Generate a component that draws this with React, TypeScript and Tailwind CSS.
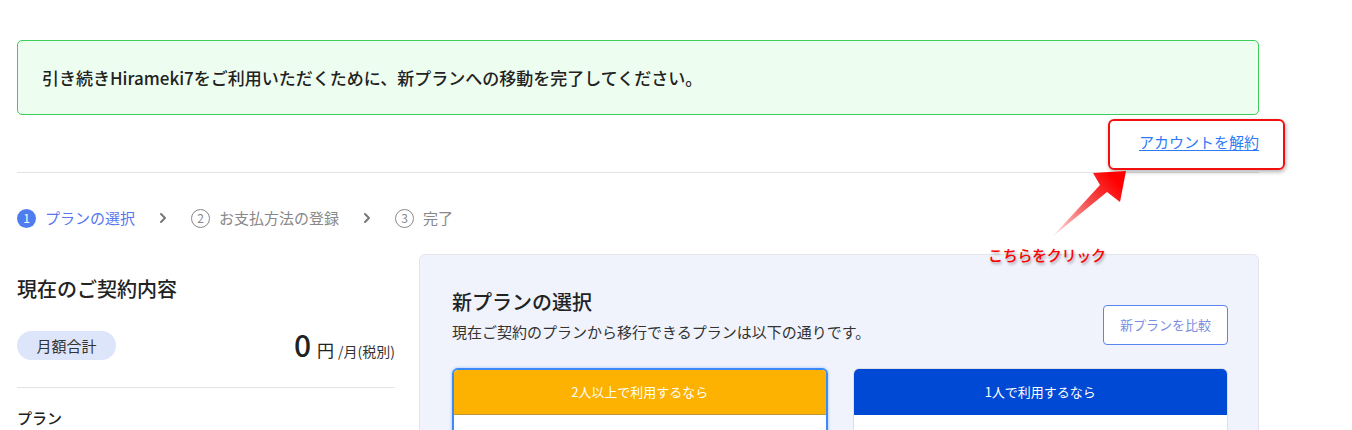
import React from "react";

const font = { fontFamily: '"Noto Sans CJK JP", "Noto Sans", sans-serif' };

const Chevron: React.FC = () => (
  <svg className="w-[8px] h-[12px] text-[#777]" viewBox="0 0 8 12" fill="none">
    <path d="M2 2l4 4-4 4" stroke="currentColor" strokeWidth={2} strokeLinecap="round" strokeLinejoin="round" />
  </svg>
);

const Step: React.FC<{ n: number; label: string; active?: boolean }> = ({ n, label, active }) => (
  <div className="flex items-center gap-[9px]">
    {active ? (
      <span className="w-[19px] h-[19px] rounded-full bg-[#4f7df0] text-white text-[12px] flex items-center justify-center leading-none">
        {n}
      </span>
    ) : (
      <span className="w-[19px] h-[19px] rounded-full border border-[#888] text-[#888] text-[12px] flex items-center justify-center leading-none">
        {n}
      </span>
    )}
    <span className={active ? "text-[15px] text-[#5877f0]" : "text-[15px] text-[#888]"}>{label}</span>
  </div>
);

const App: React.FC = () => {
  return (
    <div className="relative w-[1352px] h-[430px] overflow-hidden bg-white text-[#222]" style={font}>
      <div className="w-[1242px] ml-[17px] pt-[40px]">
        {/* notice */}
        <div className="h-[75px] border border-[#3ccd5b] rounded-[5px] bg-[#edfdf0] flex items-center px-[24px]">
          <p className="text-[17px] font-medium text-[#222]">
            引き続きHirameki7をご利用いただくために、新プランへの移動を完了してください。
          </p>
        </div>

        <div className="h-[58px] border-b border-[#e2e2e2] flex items-center justify-end pb-[3px]">
          <a href="#" className="text-[15px] text-[#2f7bf5] underline underline-offset-2">
            アカウントを解約
          </a>
        </div>

        {/* stepper */}
        <div className="mt-[35px] h-[20px] flex items-center gap-[24px]">
          <Step n={1} label="プランの選択" active />
          <Chevron />
          <Step n={2} label="お支払方法の登録" />
          <Chevron />
          <Step n={3} label="完了" />
        </div>

        <div className="mt-[26px] flex gap-[24px] items-start">
          {/* current contract */}
          <div className="w-[378px] shrink-0 pt-[21px]">
            <h2 className="text-[20px] font-medium leading-[28px]">現在のご契約内容</h2>
            <div className="mt-[26px] flex items-center justify-between">
              <span className="h-[29px] w-[99px] rounded-full bg-[#dde5fb] text-[15px] text-[#333] flex items-center justify-center">
                月額合計
              </span>
              <div className="flex items-baseline">
                <span className="text-[30px] leading-none font-medium">0</span>
                <span className="text-[17px] ml-[6px]">円</span>
                <span className="text-[14px] ml-[4px] text-[#333]">/月(税別)</span>
              </div>
            </div>
            <div className="mt-[24px] border-t border-[#e2e2e2]" />
            <p className="mt-[19px] text-[15px] font-medium leading-[22px]">プラン</p>
          </div>

          {/* new plan */}
          <div className="flex-1 h-[260px] bg-[#f0f3fc] border border-[#e3e5ea] rounded-[6px] pl-[32px] pr-[30px] pt-[33px]">
            <div className="flex items-end justify-between">
              <div>
                <h2 className="text-[20px] font-medium leading-[28px]">新プランの選択</h2>
                <p className="mt-[5px] text-[15px] text-[#333]">現在ご契約のプランから移行できるプランは以下の通りです。</p>
              </div>
              <button className="w-[125px] h-[40px] rounded-[4px] border border-[#5a84ef] bg-white text-[13px] text-[#7a8fe2] mb-[-1px]">
                新プランを比較
              </button>
            </div>
            <div className="mt-[24px] grid grid-cols-2 gap-[25px]">
              <div className="rounded-t-[6px] border-2 border-[#3b8af6] bg-white h-[200px] overflow-hidden shadow-[0_0_3px_rgba(59,138,246,0.5)]">
                <div className="h-[45px] bg-[#fdb100] text-white text-[13px] flex items-center justify-center border-b border-[#b99a3a]">
                  2人以上で利用するなら
                </div>
              </div>
              <div className="rounded-t-[6px] border border-[#dcdfe6] bg-white h-[200px] overflow-hidden">
                <div className="h-[46px] bg-[#0049d5] text-white text-[13px] flex items-center justify-center">
                  1人で利用するなら
                </div>
              </div>
            </div>
          </div>
        </div>
      </div>

      {/* annotation overlay */}
      <div className="absolute left-[1108px] top-[119px] w-[177px] h-[51px] border-2 border-[#f01010] rounded-[6px] shadow-[1px_2px_4px_rgba(0,0,0,0.3)]" />
      <svg className="absolute left-[1040px] top-[165px]" width="100" height="80" viewBox="1040 165 100 80">
        <defs>
          <linearGradient id="arr" x1="1052" y1="237" x2="1115" y2="180" gradientUnits="userSpaceOnUse">
            <stop offset="0" stopColor="#ff0000" stopOpacity="0.05" />
            <stop offset="0.6" stopColor="#f02020" stopOpacity="0.8" />
            <stop offset="1" stopColor="#ff0000" />
          </linearGradient>
        </defs>
        <polygon points="1052,237 1100,185 1093,173 1126,171 1120,202 1107,192" fill="url(#arr)" />
      </svg>
      <span
        className="absolute left-[988px] top-[244px] text-[15px] font-medium text-[#ff0000] tracking-[-0.3px]"
        style={{ textShadow: "1px 2px 3px rgba(0,0,0,0.35)" }}
      >
        こちらをクリック
      </span>
    </div>
  );
};

export default App;
